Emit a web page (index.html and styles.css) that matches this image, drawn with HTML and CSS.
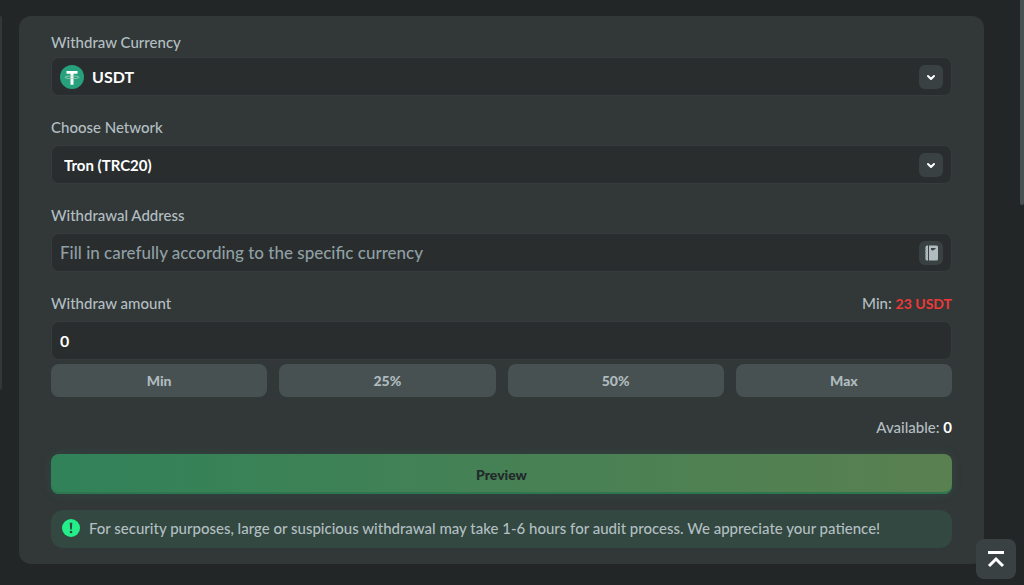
FILE: index.html
```
<!DOCTYPE html>
<html lang="en">
<head>
    <meta charset="UTF-8">
    <meta name="viewport" content="width=device-width, initial-scale=1.0">
    <title>Withdraw</title>
    <link rel="stylesheet" href="styles.css">
</head>
<body>
    <div class="layout">
        <aside class="side-menu"></aside>

        <main class="panel">
            <form>
                <div class="group">
                    <label class="label label-tight" for="currency">Withdraw Currency</label>
                    <div class="field">
                        <svg class="coin" viewBox="0 0 24 24">
                            <circle cx="12" cy="12" r="12" fill="#26a17b"/>
                            <path d="M6.500 6h11v2.700h-4v11h-3v-11h-4z" fill="#fff"/>
                            <path d="M5 12.300c0 1.900 14 1.900 14 0s-14-1.600-14 0z" fill="none" stroke="#a9cfc2" stroke-width=".8"/>
                        </svg>
                        <select class="control" id="currency">
                            <option>USDT</option>
                        </select>
                        <span class="field-icon">
                            <svg viewBox="0 0 24 24"><path d="M9 11l3 3 3-3" fill="none" stroke="#fff" stroke-width="2" stroke-linecap="round" stroke-linejoin="round"/></svg>
                        </span>
                    </div>
                </div>

                <div class="group">
                    <label class="label" for="network">Choose Network</label>
                    <div class="field">
                        <select class="control network" id="network">
                            <option>Tron (TRC20)</option>
                        </select>
                        <span class="field-icon">
                            <svg viewBox="0 0 24 24"><path d="M9 11l3 3 3-3" fill="none" stroke="#fff" stroke-width="2" stroke-linecap="round" stroke-linejoin="round"/></svg>
                        </span>
                    </div>
                </div>

                <div class="group">
                    <label class="label" for="address">Withdrawal Address</label>
                    <div class="field">
                        <input class="control address" id="address" type="text" placeholder="Fill in carefully according to the specific currency">
                        <button class="field-icon" type="button" aria-label="Address book">
                            <svg viewBox="0 0 24 24">
                                <path d="M9 4.500v15H8a1.500 1.500 0 0 1-1.500-1.500V6A1.500 1.500 0 0 1 8 4.500z" fill="#b0bcbf"/>
                                <path d="M6 7.500h1.500M6 10.500h1.500M6 13.500h1.500M6 16.500h1.500" stroke="#8c9799" stroke-width="1"/>
                                <path d="M10 4.500h7.500A1.500 1.500 0 0 1 19 6v12a1.500 1.500 0 0 1-1.500 1.500H10z" fill="#b0bcbf"/>
                                <path d="M12 7h4.500v1.300l-1.500.2-.8 1H13l-1-1z" fill="#3a4142"/>
                            </svg>
                        </button>
                    </div>
                </div>

                <div class="group amount-group">
                    <div class="label-row">
                        <label class="label" for="amount">Withdraw amount</label>
                        <span class="label">Min: <b class="min">23 USDT</b></span>
                    </div>
                    <div class="field">
                        <input class="control amount" id="amount" type="text" value="0">
                    </div>
                </div>

                <div class="quick">
                    <button type="button">Min</button>
                    <button type="button">25%</button>
                    <button type="button">50%</button>
                    <button type="button">Max</button>
                </div>

                <p class="available">Available: <b>0</b></p>

                <button class="preview" type="button">Preview</button>

                <div class="notice">
                    <svg viewBox="0 0 18 18">
                        <circle cx="9" cy="9" r="9" fill="#24ee89"/>
                        <path d="M7.700 3.800h2.600l-.5 6.700H8.200z" fill="#324840"/>
                        <circle cx="9" cy="13" r="1.300" fill="#324840"/>
                    </svg>
                    <span>For security purposes, large or suspicious withdrawal may take 1-6 hours for audit process. We appreciate your patience!</span>
                </div>
            </form>
        </main>
    </div>

    <div class="scroll-thumb"></div>

    <button class="to-top" type="button" aria-label="Back to top">
        <svg viewBox="0 0 40 40" fill="none" stroke="#fff" stroke-width="3">
            <path d="M12 13.500h16"/>
            <path d="M13 27l7-7 7 7"/>
        </svg>
    </button>
</body>
</html>
```

FILE: styles.css
```
* {
    box-sizing: border-box;
}

body {
    margin: 0;
    min-height: 100vh;
    background-color: #232627;
    font-family: Lato, "Open Sans", sans-serif;
    font-size: 15px;
    font-weight: 500;
    line-height: 20px;
    color: #b3bfc2;
}

button,
input,
select {
    font-family: inherit;
    border: none;
    margin: 0;
}

.layout {
    display: flex;
    gap: 17px;
    padding: 16px 40px 21px 0;
}

.side-menu {
    width: 2px;
    height: 374px;
    background-color: #323738;
    border-radius: 0 2px 2px 0;
}

.panel {
    flex: 1;
    padding: 16px 32px;
    background-color: #323738;
    border-radius: 12px;
}

.group {
    margin-bottom: 21px;
}

.amount-group {
    margin-bottom: 4px;
}

.label {
    display: block;
    margin-bottom: 8px;
}

.label-tight {
    margin-bottom: 5px;
}

.label-row {
    display: flex;
    justify-content: space-between;
}

.min {
    font-size: 14px;
    line-height: 16px;
    color: #ed3a37;
}

.field {
    display: flex;
    align-items: center;
    height: 39px;
    padding: 0 8px;
    background-color: #292d2e;
    border: 1px solid #363c3d;
    border-radius: 8px;
}

.coin {
    width: 24px;
    height: 24px;
    margin-right: 8px;
}

.control {
    flex: 1;
    min-width: 0;
    height: 24px;
    padding: 0;
    background: none;
    appearance: none;
    outline: none;
    font-size: 16px;
    font-weight: 700;
    color: #fff;
}

.network {
    padding-left: 4px;
    font-size: 15px;
}

.address {
    font-size: 17px;
    font-weight: 500;
}

.address::placeholder {
    color: #8f9fa3;
}

.field-icon {
    width: 24px;
    height: 24px;
    padding: 0;
    background-color: #3a4142;
    border-radius: 6px;
}

.field-icon svg {
    display: block;
}

.quick {
    display: grid;
    grid-template-columns: repeat(4, 1fr);
    gap: 12px;
}

.quick button {
    height: 33px;
    background-color: #485152;
    border-radius: 8px;
    font-size: 14px;
    font-weight: 900;
    color: #afbbbe;
}

.available {
    margin: 20px 0 17px;
    text-align: right;
}

.available b {
    color: #fff;
}

.preview {
    display: block;
    width: 100%;
    height: 40px;
    background: linear-gradient(90deg, #318259, #5a8050);
    border-radius: 8px;
    box-shadow: 0 0 12px rgba(35, 238, 136, 0.1), inset 0 -2px #2c7650;
    font-size: 14px;
    font-weight: 900;
    color: #22282a;
}

.notice {
    display: flex;
    align-items: center;
    gap: 9px;
    min-height: 38px;
    margin-top: 16px;
    padding: 0 11px 2px;
    background-color: #324840;
    border-radius: 12px;
}

.notice svg {
    flex: none;
    width: 18px;
    height: 18px;
}

/* overlays */
.scroll-thumb {
    position: fixed;
    top: 0;
    right: 0;
    width: 4px;
    height: 205px;
    background-color: #485152;
    border-radius: 0 0 2px 2px;
}

.to-top {
    position: fixed;
    right: 8px;
    bottom: 6px;
    width: 40px;
    height: 40px;
    padding: 0;
    background-color: #3a4142;
    border-radius: 8px;
}

.to-top svg {
    display: block;
}
```
